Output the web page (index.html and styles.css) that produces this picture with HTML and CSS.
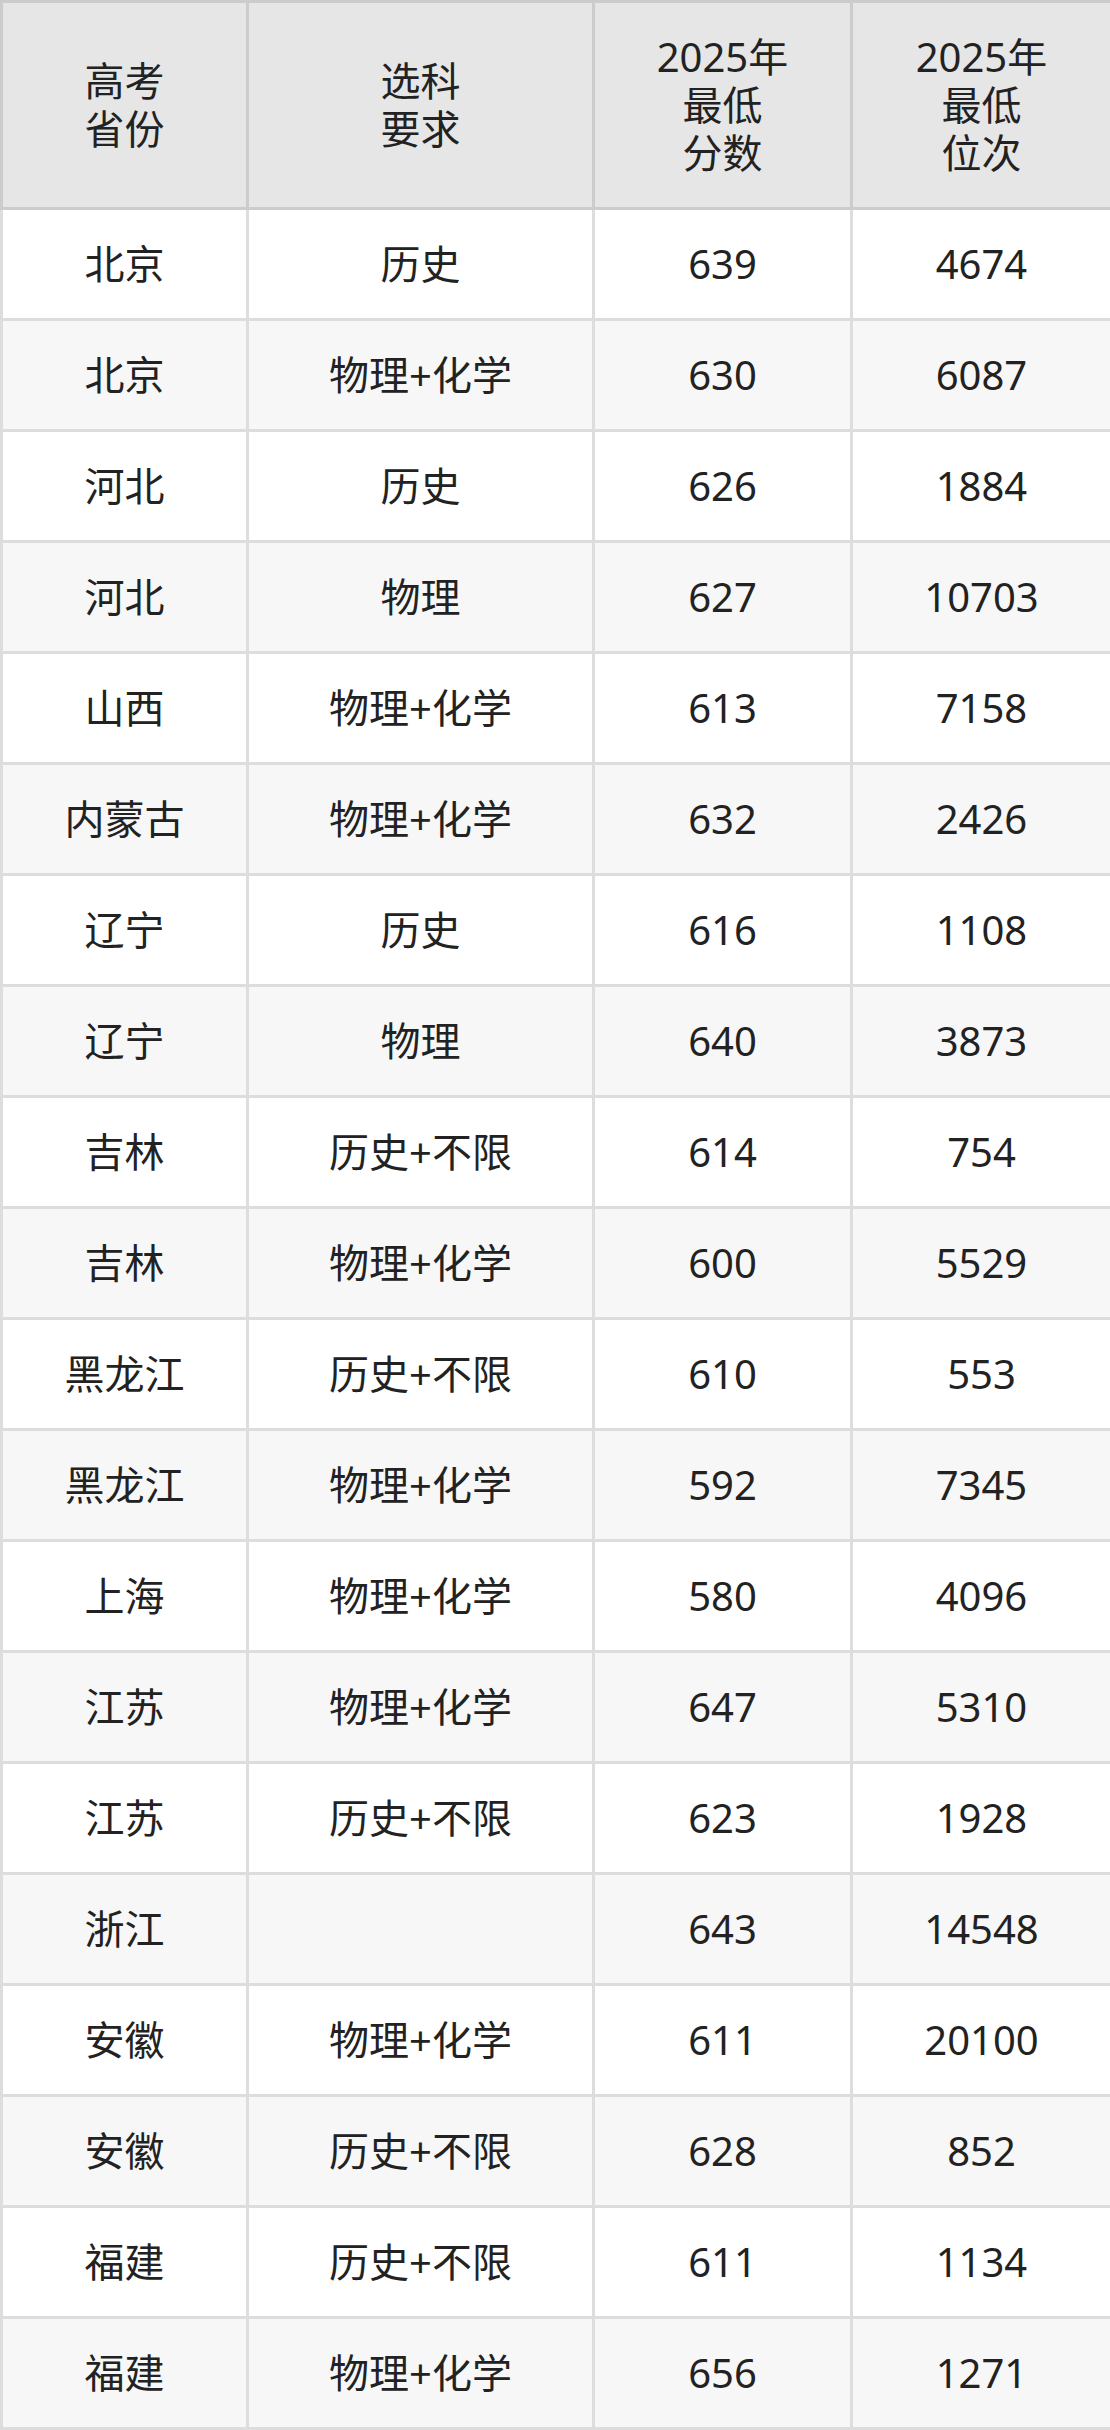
FILE: index.html
```html
<!DOCTYPE html>
<html lang="zh-CN">
<head>
<meta charset="utf-8">
<title>分数线</title>
<link rel="stylesheet" href="styles.css">
</head>
<body>
<table class="score-table">
<colgroup>
<col class="c1"><col class="c2"><col class="c3"><col class="c4">
</colgroup>
<thead>
<tr><th>高考<br>省份</th><th>选科<br>要求</th><th>2025年<br>最低<br>分数</th><th>2025年<br>最低<br>位次</th></tr>
</thead>
<tbody>
<tr><td>北京</td><td>历史</td><td>639</td><td>4674</td></tr>
<tr><td>北京</td><td>物理+化学</td><td>630</td><td>6087</td></tr>
<tr><td>河北</td><td>历史</td><td>626</td><td>1884</td></tr>
<tr><td>河北</td><td>物理</td><td>627</td><td>10703</td></tr>
<tr><td>山西</td><td>物理+化学</td><td>613</td><td>7158</td></tr>
<tr><td>内蒙古</td><td>物理+化学</td><td>632</td><td>2426</td></tr>
<tr><td>辽宁</td><td>历史</td><td>616</td><td>1108</td></tr>
<tr><td>辽宁</td><td>物理</td><td>640</td><td>3873</td></tr>
<tr><td>吉林</td><td>历史+不限</td><td>614</td><td>754</td></tr>
<tr><td>吉林</td><td>物理+化学</td><td>600</td><td>5529</td></tr>
<tr><td>黑龙江</td><td>历史+不限</td><td>610</td><td>553</td></tr>
<tr><td>黑龙江</td><td>物理+化学</td><td>592</td><td>7345</td></tr>
<tr><td>上海</td><td>物理+化学</td><td>580</td><td>4096</td></tr>
<tr><td>江苏</td><td>物理+化学</td><td>647</td><td>5310</td></tr>
<tr><td>江苏</td><td>历史+不限</td><td>623</td><td>1928</td></tr>
<tr><td>浙江</td><td></td><td>643</td><td>14548</td></tr>
<tr><td>安徽</td><td>物理+化学</td><td>611</td><td>20100</td></tr>
<tr><td>安徽</td><td>历史+不限</td><td>628</td><td>852</td></tr>
<tr><td>福建</td><td>历史+不限</td><td>611</td><td>1134</td></tr>
<tr><td>福建</td><td>物理+化学</td><td>656</td><td>1271</td></tr>
</tbody>
</table>
</body>
</html>
```

FILE: styles.css
```css
html, body {
  margin: 0;
  padding: 0;
  background: #ffffff;
}

.score-table {
  width: 1110px;
  table-layout: fixed;
  border-collapse: collapse;
  font-family: "Noto Sans", "Noto Sans CJK SC", sans-serif;
  font-size: 40px;
  line-height: 48px;
  color: #222222;
}

.c1 { width: 246px; }
.c2 { width: 346px; }
.c3 { width: 258px; }
.c4 { width: 260px; }

.score-table th,
.score-table td {
  text-align: center;
  vertical-align: middle;
  padding: 0;
  font-weight: normal;
}

.score-table th {
  background: #e6e6e6;
  border: 3px solid #cccccc;
}

.score-table thead tr {
  height: 207px;
}

.score-table td {
  border: 3px solid #dddddd;
}

.score-table tbody tr {
  height: 111px;
  background: #ffffff;
}

.score-table tbody tr:nth-child(even) {
  background: #f7f7f7;
}
```
